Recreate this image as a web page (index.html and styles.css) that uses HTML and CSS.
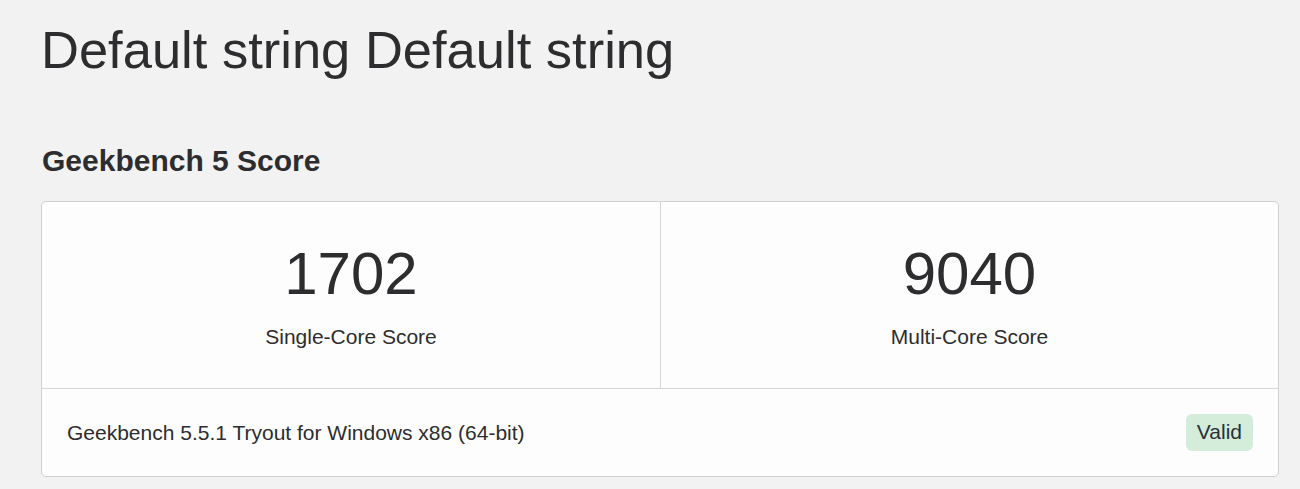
FILE: index.html
```html
<!DOCTYPE html>
<html lang="en">
<head>
<meta charset="utf-8">
<title>Geekbench 5 Score</title>
<link rel="stylesheet" href="styles.css">
</head>
<body>
<main class="page">
  <h1 class="title">Default string Default string</h1>
  <h2 class="section-title">Geekbench 5 Score</h2>
  <div class="card">
    <div class="scores">
      <div class="score">
        <div class="score-value">1702</div>
        <div class="score-label">Single-Core Score</div>
      </div>
      <div class="score">
        <div class="score-value">9040</div>
        <div class="score-label">Multi-Core Score</div>
      </div>
    </div>
    <div class="card-footer">
      <span class="version">Geekbench 5.5.1 Tryout for Windows x86 (64-bit)</span>
      <span class="badge">Valid</span>
    </div>
  </div>
</main>
</body>
</html>
```

FILE: styles.css
```css
html, body {
  margin: 0;
  padding: 0;
  background: #f2f2f2;
}

body {
  font-family: "Liberation Sans", Arial, sans-serif;
  color: #2d2d2f;
}

.page {
  padding: 18px 21px 0 41px;
}

.title {
  margin: 0;
  font-size: 52.5px;
  font-weight: 400;
  line-height: 1.2;
}

.section-title {
  margin: 62px 0 22px 1px;
  font-size: 30px;
  font-weight: 700;
  line-height: 1.2;
}

.card {
  background: #fdfdfd;
  border: 1px solid #cfcfcf;
  border-radius: 5px;
}

.scores {
  display: grid;
  grid-template-columns: 1fr 1fr;
  border-bottom: 1px solid #d6d6d6;
}

.score {
  text-align: center;
  padding: 36px 0 36px;
}

.score + .score {
  border-left: 1px solid #d6d6d6;
}

.score-value {
  font-size: 60px;
  line-height: 72px;
}

.score-label {
  margin-top: 12px;
  font-size: 21px;
  line-height: 30px;
}

.card-footer {
  display: flex;
  align-items: center;
  justify-content: space-between;
  padding: 25px 25px;
  font-size: 21px;
}

.version {
  line-height: 30px;
}

.badge {
  background: #d4eddb;
  color: #2b2f36;
  border-radius: 6px;
  padding: 3px 11px 4px;
  line-height: 30px;
}
```
